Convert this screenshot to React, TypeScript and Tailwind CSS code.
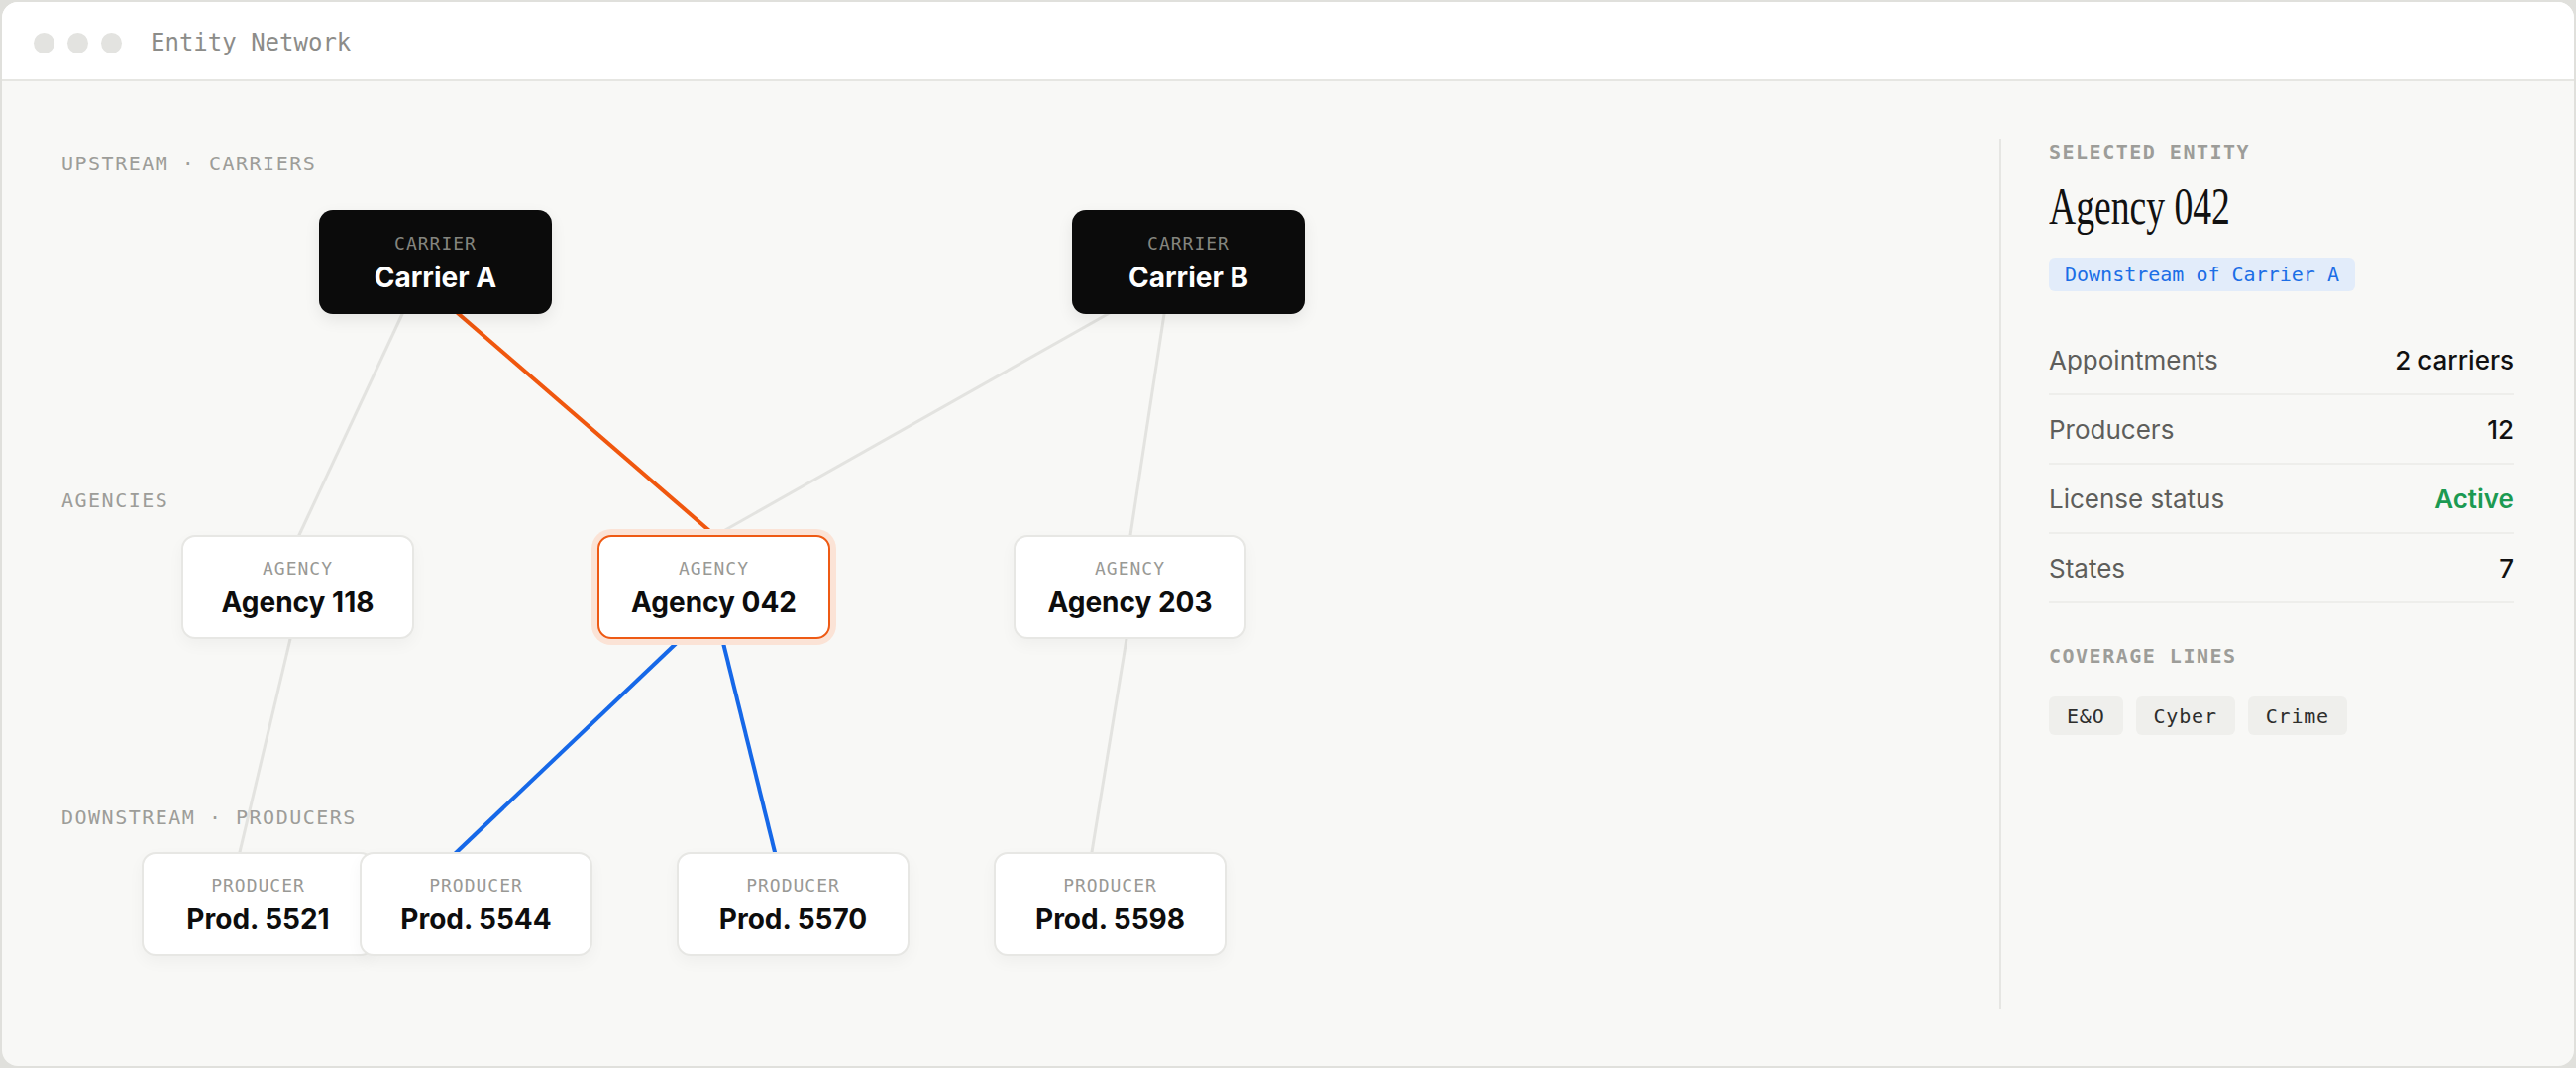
const MONO = "font-['DejaVu_Sans_Mono',monospace]"

type Node = { label: string; name: string; x: number; y: number; dark?: boolean; selected?: boolean }

const NODES: Node[] = [
  { label: 'CARRIER', name: 'Carrier A', x: 320, y: 130, dark: true },
  { label: 'CARRIER', name: 'Carrier B', x: 1080, y: 130, dark: true },
  { label: 'AGENCY', name: 'Agency 118', x: 181, y: 458 },
  { label: 'AGENCY', name: 'Agency 042', x: 601, y: 458, selected: true },
  { label: 'AGENCY', name: 'Agency 203', x: 1021, y: 458 },
  { label: 'PRODUCER', name: 'Prod. 5521', x: 141, y: 778 },
  { label: 'PRODUCER', name: 'Prod. 5544', x: 361, y: 778 },
  { label: 'PRODUCER', name: 'Prod. 5570', x: 681, y: 778 },
  { label: 'PRODUCER', name: 'Prod. 5598', x: 1001, y: 778 },
]

// edge endpoints sit on the node borders; colour = highlighted path
const EDGES: { a: [number, number]; b: [number, number]; color?: string }[] = [
  { a: [404, 235], b: [300, 458] },
  { a: [1116, 235], b: [721, 458] },
  { a: [1173, 235], b: [1139, 458] },
  { a: [291, 563], b: [240, 778] },
  { a: [1135, 563], b: [1100, 778] },
  { a: [461, 235], b: [719, 458], color: '#f0570e' },
  { a: [685, 563], b: [459, 778], color: '#1668e8' },
  { a: [727, 563], b: [780, 778], color: '#1668e8' },
]

const LANES = [
  { text: 'UPSTREAM · CARRIERS', y: 71 },
  { text: 'AGENCIES', y: 411 },
  { text: 'DOWNSTREAM · PRODUCERS', y: 731 },
]

const STATS = [
  { label: 'Appointments', value: '2 carriers' },
  { label: 'Producers', value: '12' },
  { label: 'License status', value: 'Active', good: true },
  { label: 'States', value: '7' },
]

function extend(a: [number, number], b: [number, number], d: number) {
  const dx = b[0] - a[0]
  const dy = b[1] - a[1]
  const len = Math.hypot(dx, dy)
  const ux = dx / len
  const uy = dy / len
  return { x1: a[0] - ux * d, y1: a[1] - uy * d, x2: b[0] + ux * d, y2: b[1] + uy * d }
}

function NodeCard({ n }: { n: Node }) {
  const base = 'absolute flex h-[105px] w-[235px] flex-col items-center justify-center gap-[8px] pt-[4px] rounded-[14px]'
  const tone = n.dark
    ? 'bg-[#0b0b0b] shadow-[0_6px_16px_rgba(0,0,0,0.08)]'
    : n.selected
      ? 'bg-white border-2 border-[#ee5a14] shadow-[0_0_0_6px_#fbe3d6]'
      : 'bg-white border-2 border-[#e7e7e4] shadow-[0_6px_16px_rgba(0,0,0,0.04)]'
  return (
    <div className={`${base} ${tone}`} style={{ left: n.x, top: n.y }}>
      <span className={`${MONO} text-[18px] leading-[18px] tracking-[1px] ${n.dark ? 'text-[#85857f]' : 'text-[#999995]'}`}>
        {n.label}
      </span>
      <span className={`font-['Inter',sans-serif] text-[28px] leading-[34px] font-bold ${n.dark ? 'text-white' : 'text-[#0d0d0d]'}`}>
        {n.name}
      </span>
    </div>
  )
}

export default function App() {
  return (
    <div className="h-[1078px] w-[2600px] bg-[#e0e0dc] p-[2px]">
      <div className="flex h-full flex-col overflow-hidden rounded-[16px] bg-[#f8f8f6]">
        <header className="flex h-[80px] shrink-0 items-center border-b-2 border-[#e6e6e2] bg-white pl-[32px] pt-[4px]">
          <div className="flex gap-[13px]">
            <span className="h-[21px] w-[21px] rounded-full bg-[#e3e3e0]" />
            <span className="h-[21px] w-[21px] rounded-full bg-[#e3e3e0]" />
            <span className="h-[21px] w-[21px] rounded-full bg-[#e3e3e0]" />
          </div>
          <p className={`${MONO} ml-[29px] text-[24px] text-[#8c8c89]`}>Entity Network</p>
        </header>

        <main className="flex flex-1">
          <section className="relative flex-1">
            <svg className="absolute inset-0 h-full w-full" fill="none">
              {EDGES.map((e, i) => {
                const l = extend(e.a, e.b, 8)
                return (
                  <line
                    key={i}
                    {...l}
                    stroke={e.color ?? '#e3e3e0'}
                    strokeWidth={e.color ? 4 : 3}
                  />
                )
              })}
            </svg>
            {LANES.map((l) => (
              <p
                key={l.text}
                className={`${MONO} absolute left-[60px] text-[20px] leading-[24px] tracking-[1.5px] text-[#9d9d99]`}
                style={{ top: l.y }}
              >
                {l.text}
              </p>
            ))}
            {NODES.map((n) => (
              <NodeCard key={n.name} n={n} />
            ))}
          </section>

          <aside className="my-[58px] w-[580px] shrink-0 border-l-2 border-[#e6e6e3] pl-[48px] pr-[61px] pt-px">
            <p className={`${MONO} text-[20px] leading-[24px] font-bold tracking-[1.5px] text-[#9d9d99]`}>SELECTED ENTITY</p>
            <h1 className="mt-[17px] block w-max origin-left scale-x-[0.71] font-['Liberation_Serif',serif] text-[53px] leading-[53px] text-[#111]">
              Agency 042
            </h1>
            <span className={`${MONO} mt-[25px] inline-flex h-[34px] items-center rounded-[6px] bg-[#e2ecfa] px-[16px] text-[20px] text-[#1b6ee6]`}>
              Downstream of Carrier A
            </span>

            <div className="mt-[35px] font-['Inter',sans-serif]">
              {STATS.map((s) => (
                <div key={s.label} className="flex h-[70px] items-center justify-between border-b-2 border-[#eeeeeb]">
                  <span className="text-[26px] text-[#5e5e5b]">{s.label}</span>
                  <span className={`text-[26px] font-medium ${s.good ? 'text-[#1c9a52] font-semibold' : 'text-[#111]'}`}>{s.value}</span>
                </div>
              ))}
            </div>

            <p className={`${MONO} mt-[41px] text-[20px] leading-[24px] font-bold tracking-[1.5px] text-[#9d9d99]`}>COVERAGE LINES</p>
            <div className="mt-[29px] flex gap-[13px]">
              {['E&O', 'Cyber', 'Crime'].map((c) => (
                <span
                  key={c}
                  className={`${MONO} flex h-[39px] items-center rounded-[6px] bg-[#efefec] px-[18px] text-[20px] tracking-[0.8px] text-[#2e2e2c]`}
                >
                  {c}
                </span>
              ))}
            </div>
          </aside>
        </main>
      </div>
    </div>
  )
}
